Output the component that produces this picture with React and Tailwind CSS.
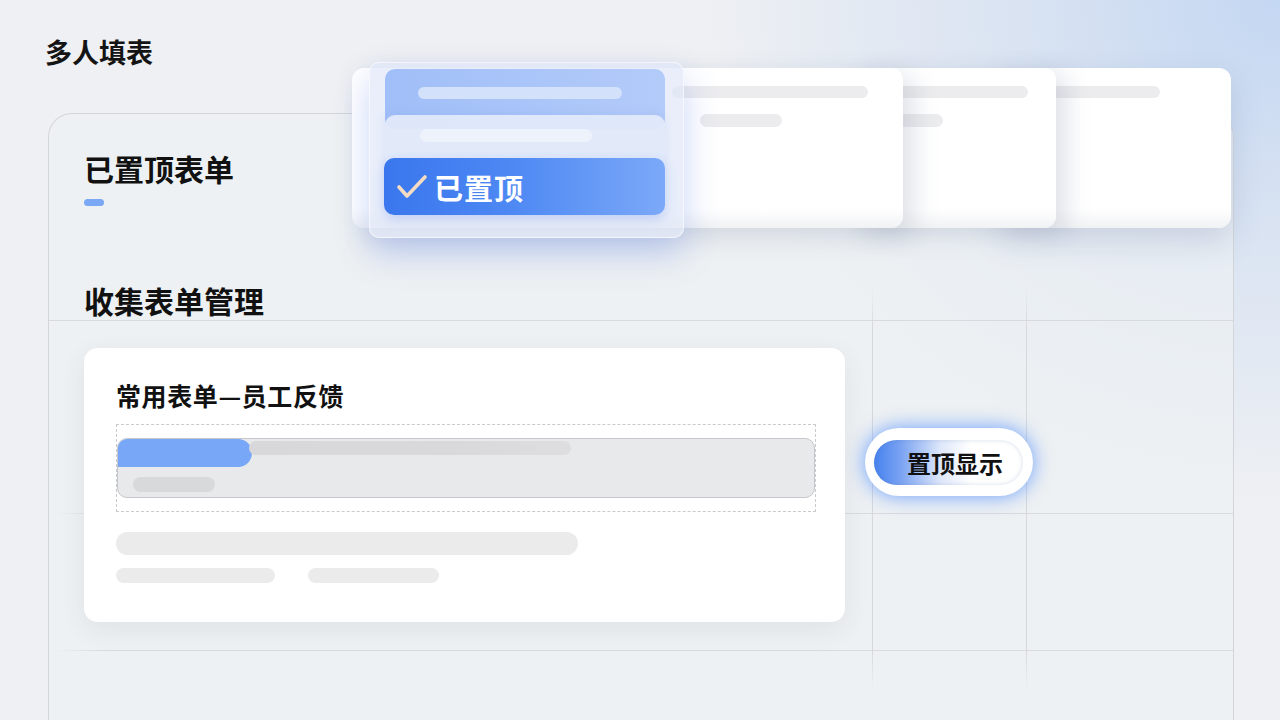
import React from 'react';

const Bar = ({ className }) => <div className={`rounded-full ${className}`} />;

const cardBg =
  'rounded-[12px] bg-[linear-gradient(180deg,#ffffff_0%,#ffffff_88%,#f1f2f4_100%)]';

const TopCards = () => (
  <div className="absolute left-[352px] top-[68px] flex">
    {/* white cards, overlapping left over right */}
    <div className={`relative z-30 w-[551px] h-[160px] ${cardBg} shadow-[10px_8px_26px_rgba(90,105,140,0.2)] pl-[320px] pt-[18px] flex flex-col gap-[16px]`}>
      <Bar className="w-[196px] h-[12px] bg-[#ececee]" />
      <Bar className="ml-[28px] w-[82px] h-[13px] bg-[#ececee]" />
    </div>
    <div className={`relative z-20 -ml-[53px] w-[206px] h-[160px] ${cardBg} shadow-[10px_6px_24px_rgba(90,105,140,0.2)] pl-[30px] pt-[18px] flex flex-col gap-[16px]`}>
      <Bar className="w-[148px] h-[12px] bg-[#ececee]" />
      <Bar className="w-[63px] h-[13px] bg-[#ececee]" />
    </div>
    <div className={`relative z-10 -ml-[56px] w-[231px] h-[160px] ${cardBg} shadow-[0_12px_30px_rgba(90,115,160,0.22)] pl-[40px] pt-[18px]`}>
      <Bar className="w-[120px] h-[12px] bg-[#ececee]" />
    </div>

    {/* translucent dropdown stack lying over the first card */}
    <div className="absolute z-40 left-[17px] -top-[6px] w-[315px] h-[176px] rounded-[10px] bg-[#dfe7f8]/70 border border-white/60 shadow-[0_16px_34px_rgba(80,120,230,0.3)] pl-[15px] pt-[6px] flex flex-col">
      <div className="w-[280px] h-[60px] rounded-[10px] bg-[linear-gradient(90deg,#a0bef8_0%,#b3cbf9_100%)] pl-[33px] pt-[18px]">
        <Bar className="w-[204px] h-[12px] bg-[#d3e1fb]" />
      </div>
      <div className="-mt-[14px] w-[280px] h-[60px] rounded-[10px] bg-[#e2e9fa]/95 shadow-[0_-2px_8px_rgba(120,150,220,0.15)] pl-[35px] pt-[14px]">
        <Bar className="w-[172px] h-[13px] bg-[#eef2fb]" />
      </div>
      <div className="-mt-[17px] -ml-px w-[281px] h-[57px] rounded-[10px] bg-[linear-gradient(90deg,#3a77ee_0%,#4d88f3_45%,#7ca9f8_100%)] flex items-center pl-[12px] shadow-[0_4px_12px_rgba(60,110,230,0.25)]">
        <svg width="32" height="26" viewBox="0 0 32 26" className="mr-[6px]">
          <polyline points="3,13 11,22 29,3" fill="none" stroke="#f6dcc3" strokeWidth="3.6" strokeLinecap="round" strokeLinejoin="round" />
        </svg>
        <span className="text-white text-[29px] leading-[34px] font-bold tracking-[1px]">已置顶</span>
      </div>
    </div>
  </div>
);

// decorative table grid drawn behind the content of the panel
const Grid = () => (
  <>
    <div className="absolute left-0 right-0 top-[206px] h-px bg-[#d8dadf]" />
    <div className="absolute left-[6px] right-0 top-[399px] h-px bg-[linear-gradient(90deg,transparent,#d8dadf_4%,#d8dadf_100%)]" />
    <div className="absolute left-[6px] right-0 top-[536px] h-px bg-[linear-gradient(90deg,transparent,#d8dadf_4%,#d8dadf_100%)]" />
    <div className="absolute left-[823px] top-[174px] w-px h-[402px] bg-[linear-gradient(180deg,transparent,#d6d8dc_10%,#d6d8dc_90%,transparent)]" />
    <div className="absolute left-[977px] top-[174px] w-px h-[402px] bg-[linear-gradient(180deg,transparent,#d6d8dc_10%,#d6d8dc_90%,transparent)]" />
  </>
);

const FormCard = () => (
  <div className="w-[761px] h-[274px] rounded-[14px] bg-white shadow-[0_8px_26px_rgba(60,70,90,0.08)] pl-[32px] pt-[32px] pr-[29px]">
    <div className="text-[25px] leading-[30px] font-bold text-[#111] tracking-[0.6px]">常用表单—员工反馈</div>
    <div className="mt-[14px] h-[88px] border border-dashed border-[#c9cacd] pt-[13px]">
      <div className="h-[60px] rounded-[10px] bg-[#e8e9eb] border border-[#c6c7ca] overflow-hidden">
        <div className="flex items-start">
          <div className="w-[134px] h-[28px] rounded-r-full bg-[#78a7f7]" />
          <div className="-ml-[3px] mt-[2px] w-[322px] h-[14px] rounded-full bg-[linear-gradient(90deg,#d8d8da_0%,#d9d9db_65%,#dedee0_100%)]" />
        </div>
        <Bar className="ml-[15px] mt-[10px] w-[82px] h-[15px] bg-[#d8d9db]" />
      </div>
    </div>
    <Bar className="mt-[20px] w-[462px] h-[23px] bg-[#ebebec]" />
    <div className="mt-[13px] flex gap-[33px]">
      <Bar className="w-[159px] h-[15px] bg-[#ebebec]" />
      <Bar className="w-[131px] h-[15px] bg-[#ebebec]" />
    </div>
  </div>
);

const PinButton = () => (
  <div className="mt-[80px] ml-[20px] w-[168px] h-[68px] rounded-full bg-white shadow-[0_0_20px_rgba(60,130,255,0.75)] pl-[9px] pt-[12px]">
    <div className="w-[149px] h-[45px] rounded-full bg-[linear-gradient(90deg,#4682ef_0%,#7aa3f2_18%,#dfe8fa_45%,#ffffff_65%)] shadow-[inset_0_0_4px_rgba(80,110,170,0.25)] flex items-center pl-[33px]">
      <span className="text-[24px] leading-[28px] font-bold text-[#111]">置顶显示</span>
    </div>
  </div>
);

export default function App() {
  return (
    <div className="relative w-[1280px] h-[720px] overflow-hidden bg-[#eef0f3] font-['Noto_Sans_CJK_SC','Noto_Sans',sans-serif]">
      <div className="absolute inset-0 bg-[radial-gradient(ellipse_45%_70%_at_100%_0%,#c4d7f2_0%,#d9e3f2_45%,transparent_100%)]" />

      <div className="relative pt-[36px] pl-[45px]">
        <div className="text-[27px] leading-[32px] font-bold text-[#141414]">多人填表</div>

        <div className="relative mt-[45px] ml-[3px] w-[1186px] h-[700px] rounded-t-[24px] border border-b-0 border-[#d3d5da] bg-[#eff1f4]/60 pl-[35px] pt-[36px]">
          <Grid />
          <div className="relative text-[30px] leading-[36px] font-bold text-[#111]">已置顶表单</div>
          <div className="relative mt-[13px] w-[20px] h-[7px] rounded-full bg-[#7aa8f5]" />
          <div className="relative mt-[76px] text-[30px] leading-[36px] font-bold text-[#111]">收集表单管理</div>
          <div className="relative mt-[30px] flex items-start">
            <FormCard />
            <PinButton />
          </div>
        </div>
      </div>

      <TopCards />
    </div>
  );
}
